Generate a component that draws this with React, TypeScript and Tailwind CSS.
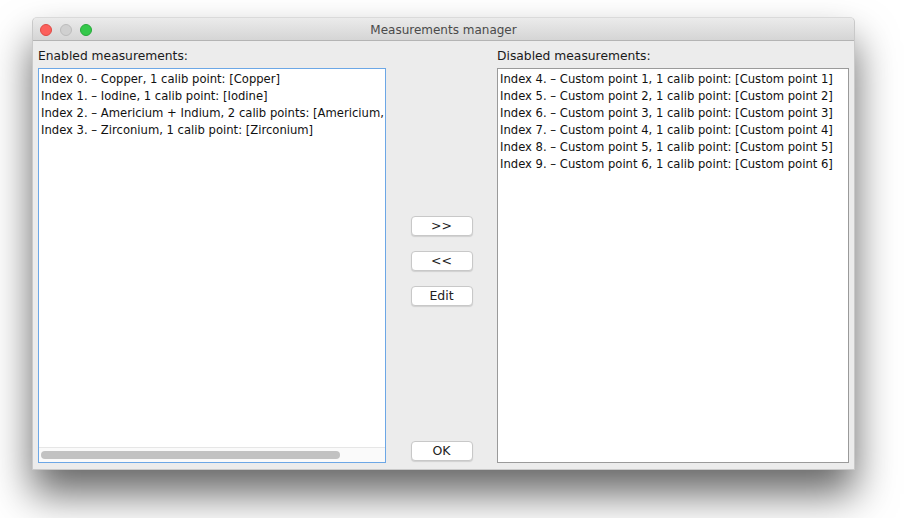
import React from 'react';

const enabled = [
  'Index 0. – Copper, 1 calib point: [Copper]',
  'Index 1. – Iodine, 1 calib point: [Iodine]',
  'Index 2. – Americium + Indium, 2 calib points: [Americium, Indium]',
  'Index 3. – Zirconium, 1 calib point: [Zirconium]',
];

const disabled = [1, 2, 3, 4, 5, 6].map(
  (n) => `Index ${n + 3}. – Custom point ${n}, 1 calib point: [Custom point ${n}]`
);

function MacButton({ label, className = '' }: { label: string; className?: string }) {
  return (
    <button
      className={`w-[62px] h-[20px] bg-white border border-[#c8c8c8] rounded-[4px] shadow-[0_1px_1px_rgba(0,0,0,0.12)] text-[12.5px] leading-none text-[#222] ${className}`}
    >
      {label}
    </button>
  );
}

export default function App() {
  return (
    <div className="w-[907px] h-[518px] bg-white pl-[32px] pt-[17px] overflow-hidden" style={{ fontFamily: '"DejaVu Sans", "Noto Sans", sans-serif' }}>
      <div className="w-[823px] h-[453px] flex flex-col bg-[#ececec] rounded-t-[5px] shadow-[0_24px_40px_rgba(0,0,0,0.6)] border border-[#c9c9c9] border-t-[#dadada]">
        {/* title bar */}
        <div className="relative h-[23px] flex items-center justify-center pt-[2px] bg-gradient-to-b from-[#ebebeb] to-[#d5d5d5] border-b border-[#b4b4b4] rounded-t-[5px]">
          <div className="absolute left-[7px] top-[6px] flex gap-[8px]">
            <span className="w-[12px] h-[12px] rounded-full bg-[#fc605c] border border-[#de4a44]" />
            <span className="w-[12px] h-[12px] rounded-full bg-[#d0d0d0] border border-[#bcbcbc]" />
            <span className="w-[12px] h-[12px] rounded-full bg-[#34c84a] border border-[#27a93a]" />
          </div>
          <span className="text-[12px] text-[#4a4a4a]">Measurements manager</span>
        </div>

        {/* body */}
        <div className="flex-1 flex px-[5px] pt-[5px] pb-[6px]">
          <div className="w-[348px] flex flex-col">
            <div className="h-[18px] text-[12.3px] text-[#1a1a1a] leading-[18px] pt-[1px]">Enabled measurements:</div>
            <div className="mt-[4px] flex-1 flex flex-col bg-white border border-[#6ca7e6] overflow-hidden">
              <div className="flex-1 pt-[2px] pl-[2px] overflow-hidden">
                {enabled.map((t) => (
                  <div key={t} className="h-[17px] leading-[17px] text-[11.6px] text-[#111] whitespace-nowrap">{t}</div>
                ))}
              </div>
              <div className="h-[15px] bg-[#fafafa] border-t border-[#e6e6e6] flex items-center px-[2px]">
                <div className="w-[299px] h-[8px] rounded-full bg-[#c2c2c2]" />
              </div>
            </div>
          </div>

          <div className="w-[111px] flex flex-col items-center pt-[170px] pb-[2px]">
            <MacButton label=">>" />
            <MacButton label="<<" className="mt-[15px]" />
            <MacButton label="Edit" className="mt-[15px]" />
            <MacButton label="OK" className="mt-auto" />
          </div>

          <div className="w-[352px] flex flex-col">
            <div className="h-[18px] text-[12.3px] text-[#1a1a1a] leading-[18px] pt-[1px]">Disabled measurements:</div>
            <div className="mt-[4px] flex-1 bg-white border border-[#9a9a9a] pt-[2px] pl-[2px] overflow-hidden">
              {disabled.map((t) => (
                <div key={t} className="h-[17px] leading-[17px] text-[11.6px] text-[#111] whitespace-nowrap">{t}</div>
              ))}
            </div>
          </div>
        </div>
      </div>
    </div>
  );
}
